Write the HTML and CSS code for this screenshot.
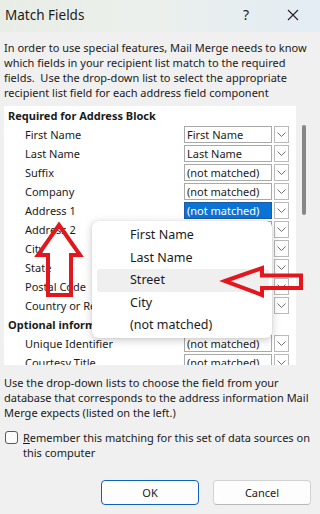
FILE: index.html
```html
<!DOCTYPE html>
<html>
<head>
<meta charset="utf-8">
<link rel="stylesheet" href="styles.css">
</head>
<body>
<div class="dialog">
  <div class="titlebar">
    <span class="title">Match Fields</span>
    <span class="help">?</span>
    <span class="close"><svg width="12" height="12" viewBox="0 0 12 12"><path d="M1 1L11 11M11 1L1 11" stroke="#222" stroke-width="1.1" fill="none"/></svg></span>
  </div>
  <div class="content">
    <p class="intro">In order to use special features, Mail Merge needs to know<br>which fields in your recipient list match to the required<br>fields.&nbsp; Use the drop-down list to select the appropriate<br>recipient list field for each address field component</p>
    <div class="listwrap">
      <div class="list">
        <div class="row head">Required for Address Block</div>
        <div class="row"><span class="lbl">First Name</span><span class="combo"><span class="val">First Name</span><span class="btn"><svg width="9" height="5" viewBox="0 0 9 5"><path d="M0.5 0.5L4.5 4.5L8.5 0.5" stroke="#6e6e6e" fill="none"/></svg></span></span></div>
        <div class="row"><span class="lbl">Last Name</span><span class="combo"><span class="val">Last Name</span><span class="btn"><svg width="9" height="5" viewBox="0 0 9 5"><path d="M0.5 0.5L4.5 4.5L8.5 0.5" stroke="#6e6e6e" fill="none"/></svg></span></span></div>
        <div class="row"><span class="lbl">Suffix</span><span class="combo"><span class="val">(not matched)</span><span class="btn"><svg width="9" height="5" viewBox="0 0 9 5"><path d="M0.5 0.5L4.5 4.5L8.5 0.5" stroke="#6e6e6e" fill="none"/></svg></span></span></div>
        <div class="row"><span class="lbl">Company</span><span class="combo"><span class="val">(not matched)</span><span class="btn"><svg width="9" height="5" viewBox="0 0 9 5"><path d="M0.5 0.5L4.5 4.5L8.5 0.5" stroke="#6e6e6e" fill="none"/></svg></span></span></div>
        <div class="row"><span class="lbl">Address 1</span><span class="combo"><span class="val sel">(not matched)</span><span class="btn"><svg width="9" height="5" viewBox="0 0 9 5"><path d="M0.5 0.5L4.5 4.5L8.5 0.5" stroke="#6e6e6e" fill="none"/></svg></span></span></div>
        <div class="row"><span class="lbl">Address 2</span><span class="combo"><span class="val">(not matched)</span><span class="btn"><svg width="9" height="5" viewBox="0 0 9 5"><path d="M0.5 0.5L4.5 4.5L8.5 0.5" stroke="#6e6e6e" fill="none"/></svg></span></span></div>
        <div class="row"><span class="lbl">City</span><span class="combo"><span class="val">(not matched)</span><span class="btn"><svg width="9" height="5" viewBox="0 0 9 5"><path d="M0.5 0.5L4.5 4.5L8.5 0.5" stroke="#6e6e6e" fill="none"/></svg></span></span></div>
        <div class="row"><span class="lbl">State</span><span class="combo"><span class="val">(not matched)</span><span class="btn"><svg width="9" height="5" viewBox="0 0 9 5"><path d="M0.5 0.5L4.5 4.5L8.5 0.5" stroke="#6e6e6e" fill="none"/></svg></span></span></div>
        <div class="row"><span class="lbl">Postal Code</span><span class="combo"><span class="val">(not matched)</span><span class="btn"><svg width="9" height="5" viewBox="0 0 9 5"><path d="M0.5 0.5L4.5 4.5L8.5 0.5" stroke="#6e6e6e" fill="none"/></svg></span></span></div>
        <div class="row"><span class="lbl">Country or Region</span><span class="combo"><span class="val">(not matched)</span><span class="btn"><svg width="9" height="5" viewBox="0 0 9 5"><path d="M0.5 0.5L4.5 4.5L8.5 0.5" stroke="#6e6e6e" fill="none"/></svg></span></span></div>
        <div class="row head">Optional information</div>
        <div class="row"><span class="lbl">Unique Identifier</span><span class="combo"><span class="val">(not matched)</span><span class="btn"><svg width="9" height="5" viewBox="0 0 9 5"><path d="M0.5 0.5L4.5 4.5L8.5 0.5" stroke="#6e6e6e" fill="none"/></svg></span></span></div>
        <div class="row"><span class="lbl">Courtesy Title</span><span class="combo"><span class="val">(not matched)</span><span class="btn"><svg width="9" height="5" viewBox="0 0 9 5"><path d="M0.5 0.5L4.5 4.5L8.5 0.5" stroke="#6e6e6e" fill="none"/></svg></span></span></div>
      </div>
      <div class="scroll"><div class="thumb"></div></div>
    </div>
    <p class="hint">Use the drop-down lists to choose the field from your<br>database that corresponds to the address information Mail<br>Merge expects (listed on the left.)</p>
    <div class="check"><span class="box"></span><span class="ctext"><u>R</u>emember this matching for this set of data sources on<br>this computer</span></div>
    <div class="buttons"><span class="button ok">OK</span><span class="button">Cancel</span></div>
  </div>
  <div class="popup">
    <div class="item">First Name</div>
    <div class="item">Last Name</div>
    <div class="item hl">Street</div>
    <div class="item">City</div>
    <div class="item">(not matched)</div>
  </div>
  <svg class="arrows" width="320" height="514" viewBox="0 0 320 514">
    <polygon points="59,225 80,255 71,255 71,295 48,295 48,255 38,255" fill="none" stroke="#e3161d" stroke-width="4" stroke-linejoin="miter"/>
    <polygon points="225,281 262,268 262,275.5 301,275.5 301,288 262,288 262,295" fill="none" stroke="#e3161d" stroke-width="4" stroke-linejoin="miter"/>
  </svg>
</div>
</body>
</html>
```
FILE: styles.css
```css
body {
  margin: 0;
  font-family: "Noto Sans", "Open Sans", sans-serif;
  font-size: 11px;
  color: #1b1b1b;
}
.dialog {
  position: relative;
  width: 320px;
  height: 514px;
  background: #f0f0f0;
  overflow: hidden;
  display: flex;
  flex-direction: column;
}
.titlebar {
  height: 32px;
  box-sizing: border-box;
  flex: none;
  display: flex;
  align-items: center;
  padding: 0 14px 3px 5px;
  background: linear-gradient(90deg, #e8ede6 0%, #ebf0ec 45%, #e4ecf4 100%);
}
.title {
  flex: 1;
  font-size: 13.5px;
}
.help {
  width: 20px;
  text-align: center;
  font-size: 14px;
  margin-right: 24px;
}
.close {
  width: 26px;
  display: flex;
  justify-content: center;
}
.content {
  flex: 1;
  display: flex;
  flex-direction: column;
  padding: 0 9px 9px 4px;
}
.intro {
  margin: 8px 0 0;
  line-height: 15px;
  white-space: nowrap;
}
.hint {
  margin: 10px 0 0;
  line-height: 15px;
  white-space: nowrap;
}
.listwrap {
  margin-top: 6px;
  height: 259px;
  display: flex;
  flex: none;
}
.list {
  width: 292px;
  background: #fff;
  overflow: hidden;
}
.row {
  height: 19px;
  display: flex;
  align-items: center;
  white-space: nowrap;
}
.row.head {
  font-weight: bold;
  padding-left: 4px;
}
.lbl {
  width: 159px;
  padding-left: 21px;
  overflow: hidden;
}
.combo {
  display: flex;
  gap: 2px;
  height: 17px;
}
.val {
  width: 88px;
  box-sizing: border-box;
  border: 1px solid #a9a9a9;
  padding-left: 2px;
  line-height: 15px;
  background: #fff;
}
.val.sel {
  background: #0a74d6;
  border-color: #1e5aa0;
  color: #fff;
}
.btn {
  width: 15px;
  box-sizing: border-box;
  border: 1px solid #b9b9b9;
  background: #fff;
  display: flex;
  align-items: center;
  justify-content: center;
}
.scroll {
  width: 15px;
  position: relative;
}
.thumb {
  margin: 19px 0 0 6px;
  width: 4px;
  height: 90px;
  border-radius: 2px;
  background: #878787;
}
.check {
  margin-top: 10px;
  display: flex;
  align-items: flex-start;
  gap: 5px;
  line-height: 15px;
  white-space: nowrap;
}
.box {
  margin: 1px 0 0 1px;
  width: 13px;
  height: 13px;
  box-sizing: border-box;
  border: 1px solid #5a5a5a;
  border-radius: 3px;
  background: #fbfbfb;
}
.buttons {
  margin-top: auto;
  display: flex;
  justify-content: flex-end;
  gap: 14px;
}
.button {
  width: 98px;
  height: 25px;
  box-sizing: border-box;
  border: 1px solid #d2d2d2;
  border-bottom-color: #b8b8b8;
  border-radius: 4px;
  background: #fdfdfd;
  display: flex;
  align-items: center;
  justify-content: center;
}
.button.ok {
  border: 1px solid #0a63bd;
}
.popup {
  position: absolute;
  left: 92px;
  top: 221px;
  width: 180px;
  height: 117px;
  box-sizing: border-box;
  padding-top: 3px;
  background: #fff;
  border-radius: 6px;
  box-shadow: 0 2px 8px rgba(0, 0, 0, 0.22), 0 0 1px rgba(0, 0, 0, 0.2);
}
.item {
  height: 22.5px;
  line-height: 22.5px;
  margin: 0 3px 0 5px;
  padding-left: 33px;
  font-size: 12.5px;
  border-radius: 3px;
}
.item.hl {
  background: #efefef;
}
.arrows {
  position: absolute;
  left: 0;
  top: 0;
  pointer-events: none;
}
```
